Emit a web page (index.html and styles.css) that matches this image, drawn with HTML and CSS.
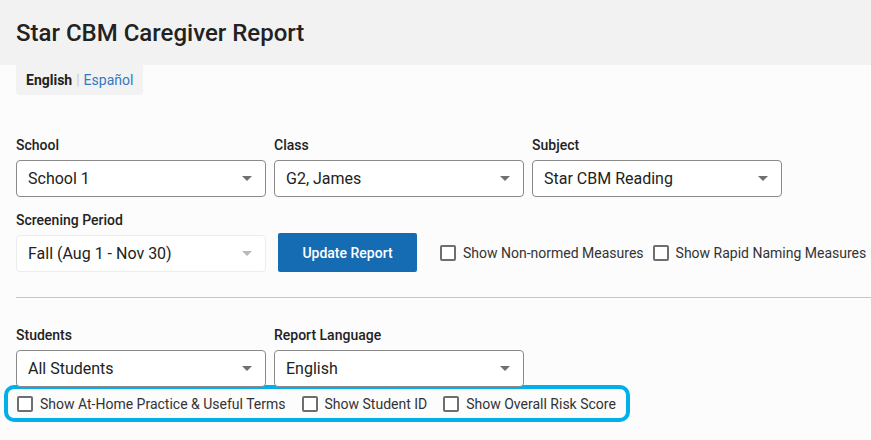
FILE: index.html
```html
<!DOCTYPE html>
<html lang="en">
<head>
  <meta charset="UTF-8" />
  <meta name="viewport" content="width=device-width, initial-scale=1.0" />
  <title>Star CBM Caregiver Report</title>
  <link rel="stylesheet" href="styles.css">
</head>
<body>
  <header class="page-header">
    <h1>Star CBM Caregiver Report</h1>
  </header>

  <div class="lang-tab">
    <span class="lang-active">English</span>
    <span class="lang-sep">|</span>
    <a href="#" class="lang-link">Español</a>
  </div>

  <section class="filters">
    <div class="field-row">
      <div class="field">
        <label>School</label>
        <div class="select"><span>School 1</span><i class="caret"></i></div>
      </div>
      <div class="field">
        <label>Class</label>
        <div class="select"><span>G2, James</span><i class="caret"></i></div>
      </div>
      <div class="field">
        <label>Subject</label>
        <div class="select"><span>Star CBM Reading</span><i class="caret"></i></div>
      </div>
    </div>

    <div class="field-row period-row">
      <div class="field">
        <label>Screening Period</label>
        <div class="select disabled"><span>Fall (Aug 1 - Nov 30)</span><i class="caret"></i></div>
      </div>
      <button class="update-btn">Update Report</button>
      <div class="checks">
        <label class="check"><span class="box"></span>Show Non-normed Measures</label>
        <label class="check"><span class="box"></span>Show Rapid Naming Measures</label>
      </div>
    </div>
  </section>

  <hr class="divider">

  <section class="filters report-opts">
    <div class="field-row">
      <div class="field">
        <label>Students</label>
        <div class="select"><span>All Students</span><i class="caret"></i></div>
      </div>
      <div class="field">
        <label>Report Language</label>
        <div class="select"><span>English</span><i class="caret"></i></div>
      </div>
    </div>
  </section>

  <div class="options-box">
    <label class="check"><span class="box"></span>Show At-Home Practice &amp; Useful Terms</label>
    <label class="check"><span class="box"></span>Show Student ID</label>
    <label class="check"><span class="box"></span>Show Overall Risk Score</label>
  </div>
</body>
</html>
```

FILE: styles.css
```css
body {
  margin: 0;
  padding: 0;
  background: #fcfcfc;
  font-family: Roboto, 'Noto Sans', sans-serif;
  color: #222;
}

.page-header {
  background: #f2f2f2;
  height: 65px;
  padding: 0 16px;
  display: flex;
  align-items: center;
}

.page-header h1 {
  margin: 0;
  font-size: 24px;
  font-weight: 500;
  color: #222;
}

.lang-tab {
  margin-left: 16px;
  width: 107px;
  height: 30px;
  padding: 0 10px;
  background: #f2f2f2;
  border-radius: 0 0 4px 4px;
  display: flex;
  align-items: center;
  gap: 4px;
  font-size: 14px;
}

.lang-active {
  font-weight: 700;
  color: #222;
}

.lang-sep {
  color: #ccc;
}

.lang-link {
  color: #3478c1;
  text-decoration: none;
}

.filters {
  padding: 0 16px;
  margin-top: 42px;
}

.report-opts {
  margin-top: 29px;
}

.field-row {
  display: flex;
  gap: 8px;
}

.period-row {
  margin-top: 15px;
  align-items: flex-end;
}

.field {
  width: 250px;
  flex-shrink: 0;
}

.field label {
  display: block;
  font-size: 14px;
  font-weight: 500;
  line-height: 17px;
  margin-bottom: 6px;
  color: #222;
}

.select {
  box-sizing: border-box;
  height: 37px;
  border: 1px solid #8a8a8a;
  border-radius: 4px;
  background: #fff;
  padding: 0 13px 0 11px;
  display: flex;
  align-items: center;
  justify-content: space-between;
  font-size: 16px;
  color: #222;
}

.select.disabled {
  border-color: #ececec;
}

.caret {
  width: 0;
  height: 0;
  border-left: 5px solid transparent;
  border-right: 5px solid transparent;
  border-top: 5px solid #707070;
}

.select.disabled .caret {
  border-top-color: #b8b8b8;
}

.update-btn {
  flex-shrink: 0;
  margin-left: 4px;
  width: 139px;
  height: 39px;
  background: #166cb3;
  color: #fff;
  border: none;
  border-radius: 2px;
  font-family: inherit;
  font-size: 14px;
  font-weight: 500;
  cursor: pointer;
}

.checks {
  display: flex;
  gap: 9px;
  margin-left: 15px;
  height: 39px;
  align-items: center;
}

.check {
  display: flex;
  align-items: center;
  gap: 7px;
  font-size: 14px;
  color: #333;
  white-space: nowrap;
}

.box {
  box-sizing: border-box;
  width: 16px;
  height: 16px;
  border: 2px solid #6e6e6e;
  border-radius: 2px;
  background: #fff;
}

.divider {
  margin: 25px 0 0 16px;
  border: none;
  border-top: 1px solid #c8c8c8;
}

.options-box {
  box-sizing: border-box;
  margin: -2px 0 0 4px;
  width: 626px;
  height: 37px;
  border: 4px solid #00b0ea;
  border-radius: 10px;
  padding: 0 9px;
  display: flex;
  align-items: center;
  gap: 16px;
}
```
